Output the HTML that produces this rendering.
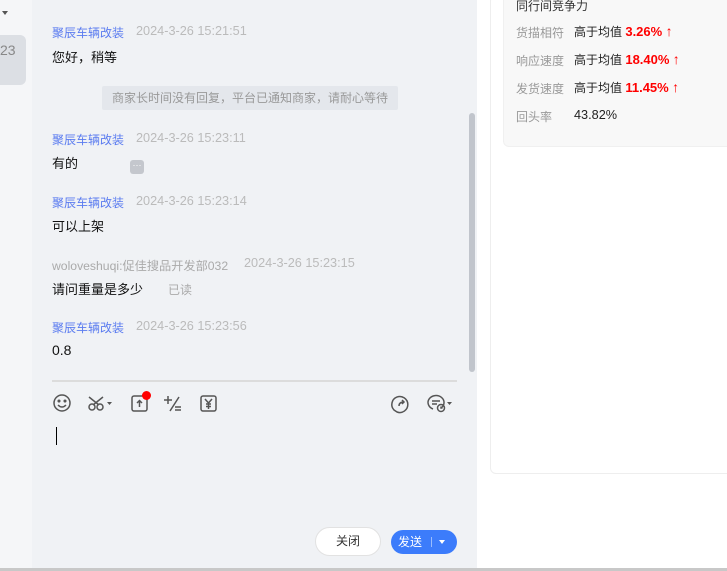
<!DOCTYPE html>
<html><head><meta charset="utf-8"><style>
*{margin:0;padding:0;box-sizing:border-box}
body{width:727px;height:571px;overflow:hidden;background:#fff;font-family:"Liberation Sans","Noto Sans CJK SC",sans-serif;position:relative}
.a{position:absolute;white-space:nowrap}
.n{font-size:12px;color:#5b7cf0}
.t{font-size:12.7px;color:#bbb}
.m{font-size:13px;color:#111}
.l{font-size:12px;color:#999}
.v{font-size:12px;color:#222}
.r{color:#f00;font-weight:bold;font-size:13px}
.u{color:#f00;font-size:14px}
</style></head><body>
<div class="a" style="left:0;top:0;width:32px;height:571px;background:#f5f6f8"></div>
<div class="a" style="left:2px;top:11px;width:0;height:0;border-left:3px solid transparent;border-right:3px solid transparent;border-top:4px solid #555"></div>
<div class="a" style="left:-10px;top:35px;width:36px;height:50px;background:#dcdfe4;border-radius:6px"></div>
<div class="a" style="left:0;top:42px;font-size:14px;color:#888">23</div>
<div class="a" style="left:32px;top:0;width:445px;height:569px;background:#f0f2f5"></div>

<div class="a n" style="left:52px;top:24px">聚辰车辆改装</div><div class="a t" style="left:136px;top:24px">2024-3-26 15:21:51</div>
<div class="a m" style="left:52px;top:47px">您好，稍等</div>
<div class="a" style="left:102px;top:86px;width:296px;height:24px;background:#e4e7ec;border-radius:2px;font-size:12px;color:#999;line-height:24px;text-align:center">商家长时间没有回复，平台已通知商家，请耐心等待</div>
<div class="a n" style="left:52px;top:131px">聚辰车辆改装</div><div class="a t" style="left:136px;top:131px">2024-3-26 15:23:11</div>
<div class="a m" style="left:52px;top:153px">有的</div>
<div class="a" style="left:130px;top:160px;width:14px;height:14px;background:#c4c7cd;border-radius:3px;color:#fff;font-size:9px;line-height:10px;text-align:center">···</div>
<div class="a n" style="left:52px;top:194px">聚辰车辆改装</div><div class="a t" style="left:136px;top:194px">2024-3-26 15:23:14</div>
<div class="a m" style="left:52px;top:216px">可以上架</div>
<div class="a" style="left:52px;top:256px;font-size:12.2px;color:#aaa">woloveshuqi:促佳搜品开发部032</div><div class="a t" style="left:244px;top:256px">2024-3-26 15:23:15</div>
<div class="a m" style="left:52px;top:279px">请问重量是多少</div><div class="a" style="left:168px;top:281px;font-size:12px;color:#aaa">已读</div>
<div class="a n" style="left:52px;top:319px">聚辰车辆改装</div><div class="a t" style="left:136px;top:319px">2024-3-26 15:23:56</div>
<div class="a m" style="left:52px;top:342px;font-size:14px">0.8</div>
<div class="a" style="left:469px;top:113px;width:6px;height:259px;background:#c1c5cc;border-radius:3px"></div>
<div class="a" style="left:52px;top:380px;width:405px;height:2px;background:#dcdcdc"></div>

<svg class="a" style="left:52px;top:393px" width="170" height="22" fill="none" stroke="#555" stroke-width="1.5">
<circle cx="10" cy="10" r="8"/><circle cx="7" cy="8" r="0.8" fill="#555"/><circle cx="13" cy="8" r="0.8" fill="#555"/><path d="M6 12q4 4 8 0"/>
<circle cx="40" cy="14" r="3"/><circle cx="48" cy="14" r="3"/><path d="M37 4l10 8M51 4l-10 8"/><path d="M55 9h5l-2.5 3z" fill="#555" stroke="none"/>
<rect x="80" y="3" width="15" height="15" rx="2"/><path d="M87.5 14v-6M85 10l2.5-2.5 2.5 2.5"/>
<path d="M116 3v8M112 7h8M118 18l9-14M123 14h6M123 17h6"/>
<rect x="149" y="3" width="15" height="15" rx="2"/><path d="M153 6l3.5 4 3.5-4M156.5 10v6M154 11h5M154 13.5h5"/>
</svg>
<div class="a" style="left:142px;top:391px;width:9px;height:9px;background:#f00;border-radius:50%"></div>
<svg class="a" style="left:390px;top:393px" width="70" height="22" fill="none" stroke="#555" stroke-width="1.5">
<path d="M4 17a8 8 0 1 1 3 2z"/><path d="M9 13q0-4 5-4M12 7l2 2-2 2"/>
<path d="M43 16a8 7 0 1 1 8 -1"/><path d="M42 8h8M42 11h5"/><circle cx="51" cy="15" r="3.5"/><path d="M51 13.5v1.5h1.5"/><path d="M57 9h5l-2.5 3z" fill="#555" stroke="none"/>
</svg>
<div class="a" style="left:56px;top:427px;width:1px;height:18px;background:#000"></div>
<div class="a" style="left:315px;top:527px;width:66px;height:29px;background:#fff;border:1px solid #e2e2e2;border-radius:15px;font-size:12px;color:#333;line-height:27px;text-align:center">关闭</div>
<div class="a" style="left:391px;top:530px;width:66px;height:24px;background:#3c7cfb;border-radius:12px;font-size:12px;color:#fff;line-height:24px;padding-left:7px">发送<span style="display:inline-block;width:1px;height:10px;background:#9bbdfd;margin:0 7px 0 9px;vertical-align:-1px"></span><span style="display:inline-block;border-left:3px solid transparent;border-right:3px solid transparent;border-top:4px solid #fff;vertical-align:2px"></span></div>

<div class="a" style="left:490px;top:-5px;width:250px;height:479px;border:1px solid #eee;border-radius:6px;background:#fff"></div>
<div class="a" style="left:503px;top:-5px;width:240px;height:152px;background:#f8f8f8;border:1px solid #f0f0f0;border-radius:6px"></div>
<div class="a" style="left:516px;top:-3px;font-size:12px;color:#333">同行间竞争力</div>
<div class="a l" style="left:516px;top:24px">货描相符</div><div class="a v" style="left:574px;top:23px">高于均值 <span class="r">3.26%</span> <span class="u">↑</span></div>
<div class="a l" style="left:516px;top:52px">响应速度</div><div class="a v" style="left:574px;top:51px">高于均值 <span class="r">18.40%</span> <span class="u">↑</span></div>
<div class="a l" style="left:516px;top:80px">发货速度</div><div class="a v" style="left:574px;top:79px">高于均值 <span class="r">11.45%</span> <span class="u">↑</span></div>
<div class="a l" style="left:516px;top:108px">回头率</div><div class="a v" style="left:574px;top:108px;font-size:12.7px">43.82%</div>
<div class="a" style="left:0;top:568px;width:727px;height:3px;background:#c8c8c8"></div>
</body></html>
